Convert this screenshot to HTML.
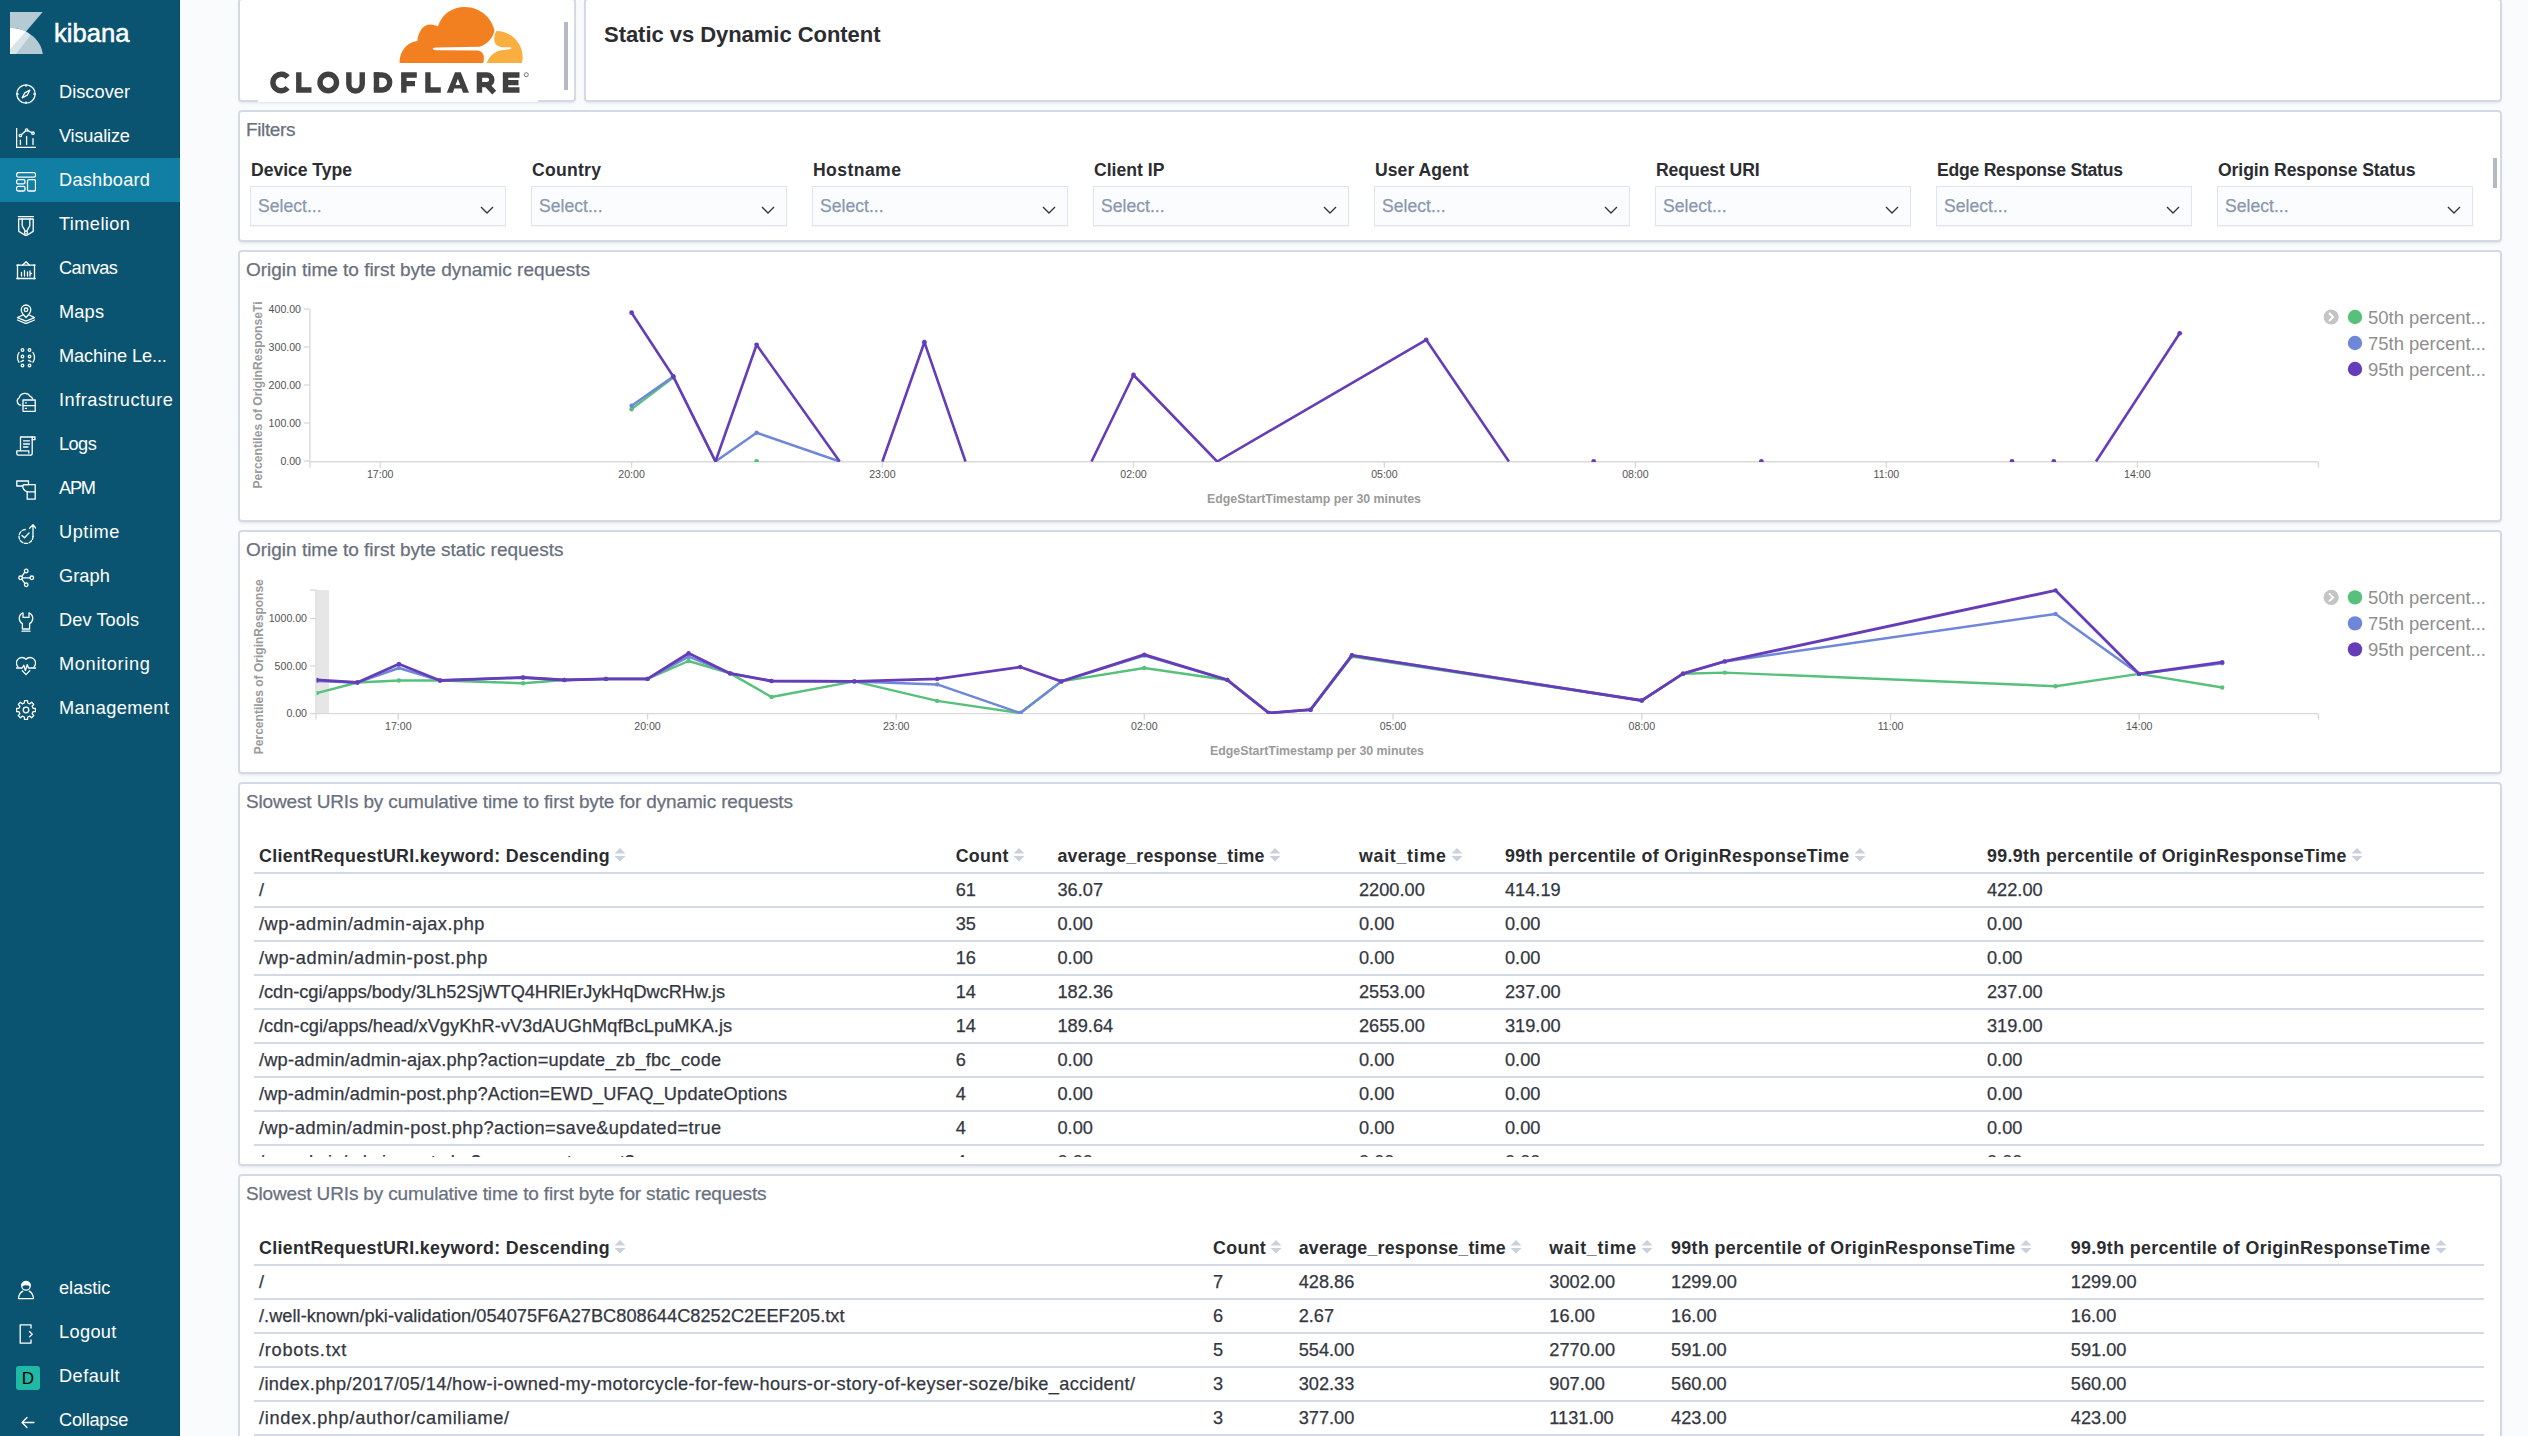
<!DOCTYPE html><html><head><meta charset="utf-8"><title>Static vs Dynamic Content - Kibana</title><style>

*{box-sizing:border-box;margin:0;padding:0}
html,body{width:2528px;height:1436px;overflow:hidden;background:#fafbfd;font-family:"Liberation Sans",sans-serif;}
.abs{position:absolute}
#nav{position:absolute;left:0;top:0;width:180px;height:1436px;background:#0b5471;}
#nav .edge{position:absolute;right:0;top:0;width:1px;height:1436px;background:#084b66}
.ni{position:absolute;left:0;width:180px;height:44px;color:#fff;font-size:18.2px;letter-spacing:0.3px;line-height:44px;white-space:nowrap}
.ni span{position:absolute;left:59px;top:0}
.ni svg{position:absolute;left:16px;top:14px;width:20px;height:20px}
.ni.act{background:#117ea3}
.panel{position:absolute;background:#fff;border:2px solid #d3dae6;border-radius:4px;box-shadow:0 2px 3px -1px rgba(152,162,179,.28)}
.ptitle{position:absolute;left:6px;margin-top:-2px;color:#69707d;-webkit-text-stroke:0.25px #69707d;font-size:19px;white-space:nowrap}
.flab{position:absolute;font-size:17.6px;font-weight:700;color:#2b2d31;white-space:nowrap}
.fsel{position:absolute;width:256px;height:40px;background:#fbfcfd;border:1px solid #dfe5ef;box-shadow:0 1px 1px rgba(0,0,0,.04)}
.fsel span{position:absolute;left:7px;top:9px;font-size:17.6px;color:#8a98ae;-webkit-text-stroke:0.25px #8a98ae}
.fsel svg{position:absolute;left:229px;top:19px}


.tick{font-size:10.6px;fill:#545454;font-family:"Liberation Sans"}
.axt{font-size:12.6px;font-weight:700;fill:#9a9a9a;font-family:"Liberation Sans"}
.leg{font-size:17.6px;fill:#8f8f8f;font-family:"Liberation Sans"}


.tbl{position:absolute;left:0;top:0}
.th{position:absolute;font-size:17.8px;margin-top:-2px;font-weight:700;color:#2a2c30;white-space:nowrap;line-height:20px}
.td{position:absolute;font-size:18.2px;color:#343741;-webkit-text-stroke:0.25px #343741;white-space:nowrap;line-height:20px}
.rl{position:absolute;height:2px;background:#d3dae6}
.sort{display:inline-block;vertical-align:top;margin-left:4px;margin-top:1px}

</style></head><body>
<div id="nav"><div class="edge"></div>
<svg class="abs" style="left:0;top:0" width="180" height="70" viewBox="0 0 180 70">
<path d="M10 12H42.7L26 31.6C21 29 15 28 10 28Z" fill="#b5cad3"/>
<path d="M10 28C24 28 40.5 37 42.8 54H10Z" fill="#b5cad3"/>
<path d="M10 28C16 28 21.5 29.3 26 31.6L10 49.8Z" fill="#fff"/>
<path d="M26 31.6C27.6 32.6 29.2 33.8 30.5 35.2L16 54H10V49.8Z" fill="#d9e4e9"/>
</svg>
<div class="abs" style="left:54px;top:15px;font-size:25.6px;color:#fff;letter-spacing:0px;-webkit-text-stroke:0.5px #fff;line-height:36px">kibana</div>
<div class="ni" style="top:70px"><svg viewBox="0 0 20 20" width="20" height="20"><g fill="none" stroke="#fff" stroke-width="1.3" stroke-linecap="round" stroke-linejoin="round"><circle cx="10" cy="10" r="9.2"/><path d="M13.8 6.2 L11.2 11.2 L6.2 13.8 L8.8 8.8 Z"/><path d="M10 0.8v1.4M10 17.8v1.4M0.8 10h1.4M17.8 10h1.4"/></g></svg><span style="letter-spacing:0.030px">Discover</span></div>
<div class="ni" style="top:114px"><svg viewBox="0 0 20 20" width="20" height="20"><g fill="none" stroke="#fff" stroke-width="1.3" stroke-linecap="round" stroke-linejoin="round"><path d="M0.6 0V19.4H20"/><path d="M4.4 16.6V12.2M10.6 16.6V8.6M17 16.6V10.6"/><path d="M5.5 6.6L9.5 2.9M11.8 2.6L15.9 4.6"/><circle cx="4.4" cy="7.5" r="1.2"/><circle cx="10.6" cy="2" r="1.2"/><circle cx="17" cy="5.2" r="1.2"/></g></svg><span style="letter-spacing:-0.188px">Visualize</span></div>
<div class="ni act" style="top:158px"><svg viewBox="0 0 20 20" width="20" height="20"><g fill="none" stroke="#fff" stroke-width="1.3" stroke-linecap="round" stroke-linejoin="round"><rect x="0.6" y="0.6" width="19" height="4.6" rx="2"/><rect x="0.6" y="7.7" width="8.4" height="4.2" rx="1.6"/><rect x="0.6" y="14.4" width="8.4" height="4.6" rx="1.6"/><rect x="11.5" y="7.7" width="8" height="11.3" rx="1.6"/></g></svg><span style="letter-spacing:0.246px">Dashboard</span></div>
<div class="ni" style="top:202px"><svg viewBox="0 0 20 20" width="20" height="20"><g fill="none" stroke="#fff" stroke-width="1.3" stroke-linecap="round" stroke-linejoin="round"><path d="M2.4 0.6H17.4"/><path d="M2.6 3H17.2V15.4L10 19.8L2.8 15.4Z"/><path d="M6.2 3.2V9.8L9 14.6M13.8 3.2V9.8L11 14.6"/><circle cx="10" cy="16.6" r="1.5"/></g></svg><span style="letter-spacing:0.414px">Timelion</span></div>
<div class="ni" style="top:246px"><svg viewBox="0 0 20 20" width="20" height="20"><g fill="none" stroke="#fff" stroke-width="1.3" stroke-linecap="round" stroke-linejoin="round"><path d="M6.5 5.2L10 1.8L13.5 5.2"/><path d="M1.5 5.2H18.5V18.5H1.5Z"/><path d="M0.8 5.2h1.8M17.4 5.2h1.8M0.8 18.5h1.8M17.4 18.5h1.8"/><path d="M5.5 16V12.5M8.5 16V10.5M11.5 16V12M14 16V11M14 13.5h1.5"/></g></svg><span style="letter-spacing:-0.542px">Canvas</span></div>
<div class="ni" style="top:290px"><svg viewBox="0 0 20 20" width="20" height="20"><g fill="none" stroke="#fff" stroke-width="1.3" stroke-linecap="round" stroke-linejoin="round"><path d="M10 13.5C10 13.5 5.2 8.8 5.2 5.8A4.8 4.8 0 0 1 14.8 5.8C14.8 8.8 10 13.5 10 13.5Z"/><circle cx="10" cy="5.8" r="1.8"/><path d="M6.8 11L1.5 13.6L10 17.2L18.5 13.6L13.2 11"/><path d="M1.5 16L10 19.6L18.5 16"/></g></svg><span style="letter-spacing:0.165px">Maps</span></div>
<div class="ni" style="top:334px"><svg viewBox="0 0 20 20" width="20" height="20"><g fill="none" stroke="#fff" stroke-width="1.3" stroke-linecap="round" stroke-linejoin="round"><circle cx="6.5" cy="2" r="1.3"/><circle cx="13.5" cy="2" r="1.3"/><circle cx="6.5" cy="8.5" r="1.3"/><circle cx="13.5" cy="8.5" r="1.3"/><circle cx="6.5" cy="17.5" r="1.3"/><circle cx="13.5" cy="17.5" r="1.3"/><path d="M3 4.5Q0 9.5 3 14.2M17 4.5Q20 9.5 17 14.2M5 13.6L7.5 12.4M15 13.6L12.5 12.4"/></g></svg><span style="letter-spacing:-0.105px">Machine Le...</span></div>
<div class="ni" style="top:378px"><svg viewBox="0 0 20 20" width="20" height="20"><g fill="none" stroke="#fff" stroke-width="1.3" stroke-linecap="round" stroke-linejoin="round"><path d="M4.8 13.2A4 4 0 0 1 3.2 5.8A6 6 0 0 1 14.2 4.4A4 4 0 0 1 16.6 6.8"/><rect x="7" y="8" width="12.2" height="11.3"/><path d="M7 13.6H19.2M9.4 10.8h1M9.4 16.4h1"/></g></svg><span style="letter-spacing:0.522px">Infrastructure</span></div>
<div class="ni" style="top:422px"><svg viewBox="0 0 20 20" width="20" height="20"><g fill="none" stroke="#fff" stroke-width="1.3" stroke-linecap="round" stroke-linejoin="round"><path d="M4.5 14.8V1H19V3.6H16.2V17.2A2 2 0 0 1 14.2 19.2H2.4A1.8 1.8 0 0 1 0.8 17.4V14.8H12.8V17"/><path d="M16.2 1V3.6"/><path d="M7.5 4.8H13.5M7.5 8H13.5M7.5 11H12"/></g></svg><span style="letter-spacing:-0.555px">Logs</span></div>
<div class="ni" style="top:466px"><svg viewBox="0 0 20 20" width="20" height="20"><g fill="none" stroke="#fff" stroke-width="1.3" stroke-linecap="round" stroke-linejoin="round"><path d="M0.8 1H12.5V4.6H8.2A1.5 1.5 0 0 0 6.8 6H0.8Z"/><path d="M8.2 4.6H19.2V11.8H13.8A6 6 0 0 1 6.8 7.4V6"/><path d="M11.2 11.8V19.2H19.2V11.8"/></g></svg><span style="letter-spacing:-1.220px">APM</span></div>
<div class="ni" style="top:510px"><svg viewBox="0 0 20 20" width="20" height="20"><g fill="none" stroke="#fff" stroke-width="1.3" stroke-linecap="round" stroke-linejoin="round"><path d="M9.2 5.5A7 7 0 1 0 17 12.5" stroke-dasharray="3.2 1.6"/><path d="M17 12.5V1.2M13.6 4.2L17 0.8L20 4.2"/><path d="M6 11.5L8.5 13.8L13 9"/></g></svg><span style="letter-spacing:0.550px">Uptime</span></div>
<div class="ni" style="top:554px"><svg viewBox="0 0 20 20" width="20" height="20"><g fill="none" stroke="#fff" stroke-width="1.3" stroke-linecap="round" stroke-linejoin="round"><circle cx="10.2" cy="3" r="1.8"/><circle cx="15.8" cy="9.8" r="1.8"/><circle cx="10.2" cy="16.8" r="1.8"/><circle cx="4.6" cy="9.8" r="1.8"/><path d="M6.4 9.8H14M5.8 8.4L8.8 4.2M5.8 11.2L8.8 15.4"/></g></svg><span style="letter-spacing:0.079px">Graph</span></div>
<div class="ni" style="top:598px"><svg viewBox="0 0 20 20" width="20" height="20"><g fill="none" stroke="#fff" stroke-width="1.3" stroke-linecap="round" stroke-linejoin="round"><path d="M7 0.8A6 6 0 0 0 6.4 11.6V17H13.6V11.6A6 6 0 0 0 13 0.8V5.4H7Z"/><path d="M6 19.2H14"/></g></svg><span style="letter-spacing:0.077px">Dev Tools</span></div>
<div class="ni" style="top:642px"><svg viewBox="0 0 20 20" width="20" height="20"><g fill="none" stroke="#fff" stroke-width="1.3" stroke-linecap="round" stroke-linejoin="round"><path d="M2 11A5 5 0 0 1 10 3.2A5 5 0 0 1 18 11"/><path d="M0.5 12H6.2L7.8 9.2L9.4 14.5L11.2 8.6L12.6 12H19.5"/><path d="M6.2 14.6L10 18.6L13.8 14.6"/></g></svg><span style="letter-spacing:0.669px">Monitoring</span></div>
<div class="ni" style="top:686px"><svg viewBox="0 0 20 20" width="20" height="20"><g fill="none" stroke="#fff" stroke-width="1.3" stroke-linecap="round" stroke-linejoin="round"><path d="M19.48 8.50 L19.48 11.50 L17.00 11.68 L16.14 13.76 L17.77 15.64 L15.64 17.77 L13.76 16.14 L11.68 17.00 L11.50 19.48 L8.50 19.48 L8.32 17.00 L6.24 16.14 L4.36 17.77 L2.23 15.64 L3.86 13.76 L3.00 11.68 L0.52 11.50 L0.52 8.50 L3.00 8.32 L3.86 6.24 L2.23 4.36 L4.36 2.23 L6.24 3.86 L8.32 3.00 L8.50 0.52 L11.50 0.52 L11.68 3.00 L13.76 3.86 L15.64 2.23 L17.77 4.36 L16.14 6.24 L17.00 8.32Z"/><circle cx="10" cy="10" r="2.8"/></g></svg><span style="letter-spacing:0.419px">Management</span></div>
<div class="ni" style="top:1266px"><svg viewBox="0 0 20 20" width="20" height="20"><g fill="none" stroke="#fff" stroke-width="1.3" stroke-linecap="round" stroke-linejoin="round"><circle cx="10" cy="6" r="4.2"/><path d="M5.8 5.6A4.2 4.2 0 0 1 14.2 5.6Q10 3.6 5.8 5.6Z" fill="#fff"/><path d="M6.8 11.2Q3.5 12.8 2.6 17.4V18.6H17.4V17.4Q16.5 12.8 13.2 11.2"/></g></svg><span style="letter-spacing:-0.015px">elastic</span></div>
<div class="ni" style="top:1310px"><svg viewBox="0 0 20 20" width="20" height="20"><g fill="none" stroke="#fff" stroke-width="1.3" stroke-linecap="round" stroke-linejoin="round"><path d="M15 4V0.8H4.2V19.2H15V16"/><path d="M13.5 7.5L16.2 10.2L13.5 12.9"/></g></svg><span style="letter-spacing:0.347px">Logout</span></div>
<div class="ni" style="top:1354px"><div class="abs" style="left:16px;top:12px;width:24px;height:24px;background:#20b9a5;border-radius:3px;color:#000;font-size:17px;line-height:25px;text-align:center">D</div><span style="letter-spacing:0.489px">Default</span></div>
<div class="ni" style="top:1398px"><svg viewBox="0 0 20 20" width="20" height="20"><g fill="none" stroke="#fff" stroke-width="1.3" stroke-linecap="round" stroke-linejoin="round"><path d="M18 10.5H6M11 5.5L6 10.5L11 15.5"/></g></svg><span style="letter-spacing:-0.217px">Collapse</span></div>
</div>
<div class="panel" style="left:238px;top:-2px;width:338px;height:104px;overflow:hidden">
<svg class="abs" style="left:-2px;top:-2px" width="338" height="104" viewBox="238 -2 338 104">
<path d="M399.5 63C399.5 51 407 42 417.4 41C418 31 424 24.5 430 24.5C433.5 24.5 436 25.5 437.8 26.6C442 14 452 7 465 7C480 7 492 18 494.5 30.5C493 38 487.5 44.5 479.5 46.8L436 47.6C432 47.8 431.5 49.8 436 50.2L477.5 50.4C483.5 51 485 56 483.3 63Z" fill="#f38020"/>
<path d="M486.8 63C489.5 55 496 50.5 504 50L509.5 49.2C512 48.8 512 47.5 509.5 47.3L503 47.2C497 47 494 43.5 494.2 38.5C494.4 35 495.5 32.5 496.5 31C511 31 522.7 43 522.7 57C522.7 59.5 522.3 61.5 521.6 63Z" fill="#faae40"/>
<g fill="none" stroke="#404041" stroke-width="5.4">
<path d="M287.6 77.2A8.3 8.3 0 1 0 287.6 87.8"/>
<path d="M298.8 72.2V90H311.5"/>
<circle cx="328.25" cy="82.45" r="8.25"/>
<path d="M348.85 72.2V84.3A6.7 6.7 0 0 0 362.25 84.3V72.2"/>
<path d="M376.5 72.2V90"/><path d="M373.8 74.95H382.2A7.5 7.5 0 0 1 382.2 89.95H373.8"/>
<path d="M403.85 72.2V92.7M401.1 74.95H416.8M401.1 83.6H415"/>
<path d="M427.95 72.2V90H440.8"/>
<path d="M446.8 92.7L455 72.2H460.8L469 92.7H463L461.5 88.6H454.3L452.8 92.7ZM455.6 85H460.2L457.9 78.8Z" fill="#404041" fill-rule="evenodd" stroke="none"/>
<path d="M479.45 72.2V92.7M476.7 74.95H487A4.8 4.8 0 0 1 487 84.6H479.45M486.5 84.4L494.2 92.7"/>
<path d="M505.55 72.2V92.7M502.8 74.95H519.5M502.8 82.6H518.5M502.8 89.95H519.5"/>
</g>
<circle cx="526.3" cy="74.7" r="2" fill="none" stroke="#404041" stroke-width="0.7"/>
<rect x="564" y="22" width="4" height="68" fill="#b5b9c2"/>

</svg>
</div>
<div class="abs" style="left:258px;top:99.5px;width:280px;height:2.5px;background:#fff"></div>
<div class="panel" style="left:584px;top:-2px;width:1918px;height:104px">
<div class="abs" style="left:18px;top:22px;font-size:22px;font-weight:700;color:#2b2d31;white-space:nowrap;letter-spacing:-0.043px">Static vs Dynamic Content</div>
</div>
<div class="panel" style="left:238px;top:110px;width:2264px;height:132px">
<div class="ptitle" style="top:9px;left:6px;letter-spacing:-0.387px">Filters</div>
<div class="flab" style="left:11px;top:48px;letter-spacing:-0.042px">Device Type</div>
<div class="fsel" style="left:10px;top:74px"><span>Select...</span><svg width="14" height="8" viewBox="0 0 14 8"><path d="M1 1L7 7L13 1" fill="none" stroke="#343741" stroke-width="1.4"/></svg></div>
<div class="flab" style="left:292px;top:48px;letter-spacing:0.256px">Country</div>
<div class="fsel" style="left:291px;top:74px"><span>Select...</span><svg width="14" height="8" viewBox="0 0 14 8"><path d="M1 1L7 7L13 1" fill="none" stroke="#343741" stroke-width="1.4"/></svg></div>
<div class="flab" style="left:573px;top:48px;letter-spacing:0.415px">Hostname</div>
<div class="fsel" style="left:572px;top:74px"><span>Select...</span><svg width="14" height="8" viewBox="0 0 14 8"><path d="M1 1L7 7L13 1" fill="none" stroke="#343741" stroke-width="1.4"/></svg></div>
<div class="flab" style="left:854px;top:48px;letter-spacing:-0.002px">Client IP</div>
<div class="fsel" style="left:853px;top:74px"><span>Select...</span><svg width="14" height="8" viewBox="0 0 14 8"><path d="M1 1L7 7L13 1" fill="none" stroke="#343741" stroke-width="1.4"/></svg></div>
<div class="flab" style="left:1135px;top:48px;letter-spacing:0.040px">User Agent</div>
<div class="fsel" style="left:1134px;top:74px"><span>Select...</span><svg width="14" height="8" viewBox="0 0 14 8"><path d="M1 1L7 7L13 1" fill="none" stroke="#343741" stroke-width="1.4"/></svg></div>
<div class="flab" style="left:1416px;top:48px;letter-spacing:-0.085px">Request URI</div>
<div class="fsel" style="left:1415px;top:74px"><span>Select...</span><svg width="14" height="8" viewBox="0 0 14 8"><path d="M1 1L7 7L13 1" fill="none" stroke="#343741" stroke-width="1.4"/></svg></div>
<div class="flab" style="left:1697px;top:48px;letter-spacing:-0.249px">Edge Response Status</div>
<div class="fsel" style="left:1696px;top:74px"><span>Select...</span><svg width="14" height="8" viewBox="0 0 14 8"><path d="M1 1L7 7L13 1" fill="none" stroke="#343741" stroke-width="1.4"/></svg></div>
<div class="flab" style="left:1978px;top:48px;letter-spacing:-0.096px">Origin Response Status</div>
<div class="fsel" style="left:1977px;top:74px"><span>Select...</span><svg width="14" height="8" viewBox="0 0 14 8"><path d="M1 1L7 7L13 1" fill="none" stroke="#343741" stroke-width="1.4"/></svg></div>
<div class="abs" style="left:2253px;top:46px;width:4px;height:30px;background:#b5b9c2"></div>
</div>
<div class="panel" style="left:238px;top:250px;width:2264px;height:272px"><div class="ptitle" style="top:9px;letter-spacing:-0.008px">Origin time to first byte dynamic requests</div></div>
<svg class="abs" style="left:0;top:0" width="2528" height="1436" viewBox="0 0 2528 1436"><path d="M309.9 309V467.7" stroke="#dadada" stroke-width="1.4"/><path d="M303.9 309H309.9" stroke="#dadada" stroke-width="1.4"/><text class="tick" x="301" y="312.8" text-anchor="end">400.00</text><path d="M303.9 347H309.9" stroke="#dadada" stroke-width="1.4"/><text class="tick" x="301" y="350.8" text-anchor="end">300.00</text><path d="M303.9 385H309.9" stroke="#dadada" stroke-width="1.4"/><text class="tick" x="301" y="388.8" text-anchor="end">200.00</text><path d="M303.9 423H309.9" stroke="#dadada" stroke-width="1.4"/><text class="tick" x="301" y="426.8" text-anchor="end">100.00</text><path d="M303.9 461H309.9" stroke="#dadada" stroke-width="1.4"/><text class="tick" x="301" y="464.8" text-anchor="end">0.00</text><text class="axt" transform="translate(262.2 488.5) rotate(-90)" x="0" y="0" textLength="187" lengthAdjust="spacingAndGlyphs">Percentiles of OriginResponseTi</text><path d="M309.9 461.7H2318.4" stroke="#dadada" stroke-width="1.4"/><path d="M2318.4 461.7V467.7" stroke="#dadada" stroke-width="1.4"/><path d="M380.2 461.7V467.7" stroke="#dadada" stroke-width="1.4"/><text class="tick" x="380.2" y="478" text-anchor="middle">17:00</text><path d="M631.6 461.7V467.7" stroke="#dadada" stroke-width="1.4"/><text class="tick" x="631.6" y="478" text-anchor="middle">20:00</text><path d="M882.4 461.7V467.7" stroke="#dadada" stroke-width="1.4"/><text class="tick" x="882.4" y="478" text-anchor="middle">23:00</text><path d="M1133.5 461.7V467.7" stroke="#dadada" stroke-width="1.4"/><text class="tick" x="1133.5" y="478" text-anchor="middle">02:00</text><path d="M1384.4 461.7V467.7" stroke="#dadada" stroke-width="1.4"/><text class="tick" x="1384.4" y="478" text-anchor="middle">05:00</text><path d="M1635.4 461.7V467.7" stroke="#dadada" stroke-width="1.4"/><text class="tick" x="1635.4" y="478" text-anchor="middle">08:00</text><path d="M1886.4 461.7V467.7" stroke="#dadada" stroke-width="1.4"/><text class="tick" x="1886.4" y="478" text-anchor="middle">11:00</text><path d="M2137.3 461.7V467.7" stroke="#dadada" stroke-width="1.4"/><text class="tick" x="2137.3" y="478" text-anchor="middle">14:00</text><text class="axt" x="1314" y="502.5" text-anchor="middle" textLength="214" lengthAdjust="spacingAndGlyphs">EdgeStartTimestamp per 30 minutes</text><defs><clipPath id="c1"><rect x="310.5" y="280" width="2010" height="182"/></clipPath></defs><g clip-path="url(#c1)"><polyline points="631.6,409.2 673.3,377.5" fill="none" stroke="#57c17b" stroke-width="2.3" stroke-linejoin="round"/><circle cx="631.6" cy="409.2" r="2.2" fill="#57c17b"/><circle cx="673.3" cy="377.5" r="2.2" fill="#57c17b"/><circle cx="756.6" cy="461.5" r="2.4" fill="#57c17b"/><polyline points="631.6,405.8 673.3,376.5 715.5,461.5 756.6,432.7 839.7,461.5" fill="none" stroke="#6f87d8" stroke-width="2.5" stroke-linejoin="round"/><circle cx="631.6" cy="405.8" r="2.2" fill="#6f87d8"/><circle cx="673.3" cy="376.5" r="2.2" fill="#6f87d8"/><circle cx="756.6" cy="432.7" r="2.2" fill="#6f87d8"/><polyline points="631.6,312.7 673.3,376.5 715.5,461.5 756.6,344.8 839.7,461.5" fill="none" stroke="#663db8" stroke-width="2.6" stroke-linejoin="round"/><polyline points="882.4,461.5 924.4,342.2 965.5,461.5" fill="none" stroke="#663db8" stroke-width="2.6" stroke-linejoin="round"/><polyline points="1091.5,461.5 1133.5,375.0 1217.1,461.5 1426.2,339.8 1508.9,461.5" fill="none" stroke="#663db8" stroke-width="2.6" stroke-linejoin="round"/><polyline points="2096.0,461.5 2179.7,333.3" fill="none" stroke="#663db8" stroke-width="2.6" stroke-linejoin="round"/><circle cx="631.6" cy="312.7" r="2.4" fill="#663db8"/><circle cx="673.3" cy="376.5" r="2.4" fill="#663db8"/><circle cx="756.6" cy="344.8" r="2.4" fill="#663db8"/><circle cx="924.4" cy="342.2" r="2.4" fill="#663db8"/><circle cx="1133.5" cy="375.0" r="2.4" fill="#663db8"/><circle cx="1426.2" cy="339.8" r="2.4" fill="#663db8"/><circle cx="2179.7" cy="333.3" r="2.4" fill="#663db8"/><circle cx="1593.7" cy="461.5" r="2.4" fill="#663db8"/><circle cx="1761.4" cy="461.5" r="2.4" fill="#663db8"/><circle cx="2012.0" cy="461.5" r="2.4" fill="#663db8"/><circle cx="2053.8" cy="461.5" r="2.4" fill="#663db8"/></g><circle cx="2331.2" cy="317" r="7.6" fill="#c4c4c4"/><path d="M2329 313L2333 317L2329 321" fill="none" stroke="#fff" stroke-width="2"/><circle cx="2355" cy="317" r="7.2" fill="#57c17b"/><text class="leg" x="2368" y="323.5" textLength="118" lengthAdjust="spacingAndGlyphs">50th percent...</text><circle cx="2355" cy="343" r="7.2" fill="#6f87d8"/><text class="leg" x="2368" y="349.5" textLength="118" lengthAdjust="spacingAndGlyphs">75th percent...</text><circle cx="2355" cy="369" r="7.2" fill="#663db8"/><text class="leg" x="2368" y="375.5" textLength="118" lengthAdjust="spacingAndGlyphs">95th percent...</text></svg>
<div class="panel" style="left:238px;top:530px;width:2264px;height:244px"><div class="ptitle" style="top:9px;letter-spacing:-0.011px">Origin time to first byte static requests</div></div>
<svg class="abs" style="left:0;top:0" width="2528" height="1436" viewBox="0 0 2528 1436"><rect x="316.6" y="590" width="12.4" height="123.60000000000002" fill="#e6e6e6"/><path d="M316 590V719.6" stroke="#dadada" stroke-width="1.4"/><path d="M310 590H316" stroke="#dadada" stroke-width="1.4"/><path d="M310 618.5H316" stroke="#dadada" stroke-width="1.4"/><text class="tick" x="307" y="622.3" text-anchor="end">1000.00</text><path d="M310 666H316" stroke="#dadada" stroke-width="1.4"/><text class="tick" x="307" y="669.8" text-anchor="end">500.00</text><path d="M310 713.6H316" stroke="#dadada" stroke-width="1.4"/><text class="tick" x="307" y="717.4" text-anchor="end">0.00</text><text class="axt" transform="translate(262.6 754.2) rotate(-90)" x="0" y="0" textLength="175" lengthAdjust="spacingAndGlyphs">Percentiles of OriginResponse</text><path d="M316 713.6H2318.4" stroke="#dadada" stroke-width="1.4"/><path d="M2318.4 713.6V719.6" stroke="#dadada" stroke-width="1.4"/><path d="M398.3 713.6V719.6" stroke="#dadada" stroke-width="1.4"/><text class="tick" x="398.3" y="730" text-anchor="middle">17:00</text><path d="M647.5 713.6V719.6" stroke="#dadada" stroke-width="1.4"/><text class="tick" x="647.5" y="730" text-anchor="middle">20:00</text><path d="M896.2 713.6V719.6" stroke="#dadada" stroke-width="1.4"/><text class="tick" x="896.2" y="730" text-anchor="middle">23:00</text><path d="M1144.3 713.6V719.6" stroke="#dadada" stroke-width="1.4"/><text class="tick" x="1144.3" y="730" text-anchor="middle">02:00</text><path d="M1393 713.6V719.6" stroke="#dadada" stroke-width="1.4"/><text class="tick" x="1393" y="730" text-anchor="middle">05:00</text><path d="M1641.8 713.6V719.6" stroke="#dadada" stroke-width="1.4"/><text class="tick" x="1641.8" y="730" text-anchor="middle">08:00</text><path d="M1890.6 713.6V719.6" stroke="#dadada" stroke-width="1.4"/><text class="tick" x="1890.6" y="730" text-anchor="middle">11:00</text><path d="M2139.2 713.6V719.6" stroke="#dadada" stroke-width="1.4"/><text class="tick" x="2139.2" y="730" text-anchor="middle">14:00</text><text class="axt" x="1317" y="754.5" text-anchor="middle" textLength="214" lengthAdjust="spacingAndGlyphs">EdgeStartTimestamp per 30 minutes</text><defs><clipPath id="c2"><rect x="316.6" y="570" width="2010" height="144"/></clipPath></defs><g clip-path="url(#c2)"><polyline points="316.8,693.1 357.4,682.5 398.9,680.5 440.0,680.5 523.1,683.2 564.4,680.0 606.0,679.0 647.5,679.0 688.6,661.0 730.2,673.4 771.5,697.0 854.4,681.4 937.2,700.9 1020.3,713.0 1061.3,681.4 1144.3,668.0 1227.3,680.0 1268.9,713.0 1310.6,709.7 1351.9,656.6 1641.8,700.5 1683.0,673.7 1724.8,672.6 2055.6,686.2 2139.2,673.9 2222.2,687.5" fill="none" stroke="#57c17b" stroke-width="2.4" stroke-linejoin="round"/><circle cx="316.8" cy="693.1" r="2.2" fill="#57c17b"/><circle cx="357.4" cy="682.5" r="2.2" fill="#57c17b"/><circle cx="398.9" cy="680.5" r="2.2" fill="#57c17b"/><circle cx="440.0" cy="680.5" r="2.2" fill="#57c17b"/><circle cx="523.1" cy="683.2" r="2.2" fill="#57c17b"/><circle cx="564.4" cy="680.0" r="2.2" fill="#57c17b"/><circle cx="606.0" cy="679.0" r="2.2" fill="#57c17b"/><circle cx="647.5" cy="679.0" r="2.2" fill="#57c17b"/><circle cx="688.6" cy="661.0" r="2.2" fill="#57c17b"/><circle cx="730.2" cy="673.4" r="2.2" fill="#57c17b"/><circle cx="771.5" cy="697.0" r="2.2" fill="#57c17b"/><circle cx="854.4" cy="681.4" r="2.2" fill="#57c17b"/><circle cx="937.2" cy="700.9" r="2.2" fill="#57c17b"/><circle cx="1020.3" cy="713.0" r="2.2" fill="#57c17b"/><circle cx="1061.3" cy="681.4" r="2.2" fill="#57c17b"/><circle cx="1144.3" cy="668.0" r="2.2" fill="#57c17b"/><circle cx="1227.3" cy="680.0" r="2.2" fill="#57c17b"/><circle cx="1268.9" cy="713.0" r="2.2" fill="#57c17b"/><circle cx="1310.6" cy="709.7" r="2.2" fill="#57c17b"/><circle cx="1351.9" cy="656.6" r="2.2" fill="#57c17b"/><circle cx="1641.8" cy="700.5" r="2.2" fill="#57c17b"/><circle cx="1683.0" cy="673.7" r="2.2" fill="#57c17b"/><circle cx="1724.8" cy="672.6" r="2.2" fill="#57c17b"/><circle cx="2055.6" cy="686.2" r="2.2" fill="#57c17b"/><circle cx="2139.2" cy="673.9" r="2.2" fill="#57c17b"/><circle cx="2222.2" cy="687.5" r="2.2" fill="#57c17b"/><polyline points="316.8,681.0 357.4,682.5 398.9,668.0 440.0,680.5 523.1,677.5 564.4,680.0 606.0,678.9 647.5,678.9 688.6,656.7 730.2,673.4 771.5,681.0 854.4,681.4 937.2,684.4 1020.3,713.0 1061.3,681.4 1144.3,655.5 1227.3,679.9 1268.9,713.0 1310.6,709.7 1351.9,655.3 1641.8,700.5 1683.0,673.7 1724.8,661.4 2055.6,613.9 2139.2,673.9 2222.2,663.2" fill="none" stroke="#6f87d8" stroke-width="2.5" stroke-linejoin="round"/><circle cx="316.8" cy="681.0" r="2.2" fill="#6f87d8"/><circle cx="357.4" cy="682.5" r="2.2" fill="#6f87d8"/><circle cx="398.9" cy="668.0" r="2.2" fill="#6f87d8"/><circle cx="440.0" cy="680.5" r="2.2" fill="#6f87d8"/><circle cx="523.1" cy="677.5" r="2.2" fill="#6f87d8"/><circle cx="564.4" cy="680.0" r="2.2" fill="#6f87d8"/><circle cx="606.0" cy="678.9" r="2.2" fill="#6f87d8"/><circle cx="647.5" cy="678.9" r="2.2" fill="#6f87d8"/><circle cx="688.6" cy="656.7" r="2.2" fill="#6f87d8"/><circle cx="730.2" cy="673.4" r="2.2" fill="#6f87d8"/><circle cx="771.5" cy="681.0" r="2.2" fill="#6f87d8"/><circle cx="854.4" cy="681.4" r="2.2" fill="#6f87d8"/><circle cx="937.2" cy="684.4" r="2.2" fill="#6f87d8"/><circle cx="1020.3" cy="713.0" r="2.2" fill="#6f87d8"/><circle cx="1061.3" cy="681.4" r="2.2" fill="#6f87d8"/><circle cx="1144.3" cy="655.5" r="2.2" fill="#6f87d8"/><circle cx="1227.3" cy="679.9" r="2.2" fill="#6f87d8"/><circle cx="1268.9" cy="713.0" r="2.2" fill="#6f87d8"/><circle cx="1310.6" cy="709.7" r="2.2" fill="#6f87d8"/><circle cx="1351.9" cy="655.3" r="2.2" fill="#6f87d8"/><circle cx="1641.8" cy="700.5" r="2.2" fill="#6f87d8"/><circle cx="1683.0" cy="673.7" r="2.2" fill="#6f87d8"/><circle cx="1724.8" cy="661.4" r="2.2" fill="#6f87d8"/><circle cx="2055.6" cy="613.9" r="2.2" fill="#6f87d8"/><circle cx="2139.2" cy="673.9" r="2.2" fill="#6f87d8"/><circle cx="2222.2" cy="663.2" r="2.2" fill="#6f87d8"/><polyline points="316.8,679.9 357.4,682.5 398.9,664.0 440.0,680.5 523.1,677.5 564.4,680.0 606.0,678.9 647.5,678.9 688.6,653.2 730.2,673.4 771.5,681.0 854.4,681.4 937.2,678.9 1020.3,667.0 1061.3,681.4 1144.3,654.6 1227.3,679.9 1268.9,713.0 1310.6,709.7 1351.9,655.3 1641.8,700.5 1683.0,673.7 1724.8,661.4 2055.6,590.4 2139.2,673.9 2222.2,662.2" fill="none" stroke="#663db8" stroke-width="2.8" stroke-linejoin="round"/><circle cx="316.8" cy="679.9" r="2.2" fill="#663db8"/><circle cx="357.4" cy="682.5" r="2.2" fill="#663db8"/><circle cx="398.9" cy="664.0" r="2.2" fill="#663db8"/><circle cx="440.0" cy="680.5" r="2.2" fill="#663db8"/><circle cx="523.1" cy="677.5" r="2.2" fill="#663db8"/><circle cx="564.4" cy="680.0" r="2.2" fill="#663db8"/><circle cx="606.0" cy="678.9" r="2.2" fill="#663db8"/><circle cx="647.5" cy="678.9" r="2.2" fill="#663db8"/><circle cx="688.6" cy="653.2" r="2.2" fill="#663db8"/><circle cx="730.2" cy="673.4" r="2.2" fill="#663db8"/><circle cx="771.5" cy="681.0" r="2.2" fill="#663db8"/><circle cx="854.4" cy="681.4" r="2.2" fill="#663db8"/><circle cx="937.2" cy="678.9" r="2.2" fill="#663db8"/><circle cx="1020.3" cy="667.0" r="2.2" fill="#663db8"/><circle cx="1061.3" cy="681.4" r="2.2" fill="#663db8"/><circle cx="1144.3" cy="654.6" r="2.2" fill="#663db8"/><circle cx="1227.3" cy="679.9" r="2.2" fill="#663db8"/><circle cx="1268.9" cy="713.0" r="2.2" fill="#663db8"/><circle cx="1310.6" cy="709.7" r="2.2" fill="#663db8"/><circle cx="1351.9" cy="655.3" r="2.2" fill="#663db8"/><circle cx="1641.8" cy="700.5" r="2.2" fill="#663db8"/><circle cx="1683.0" cy="673.7" r="2.2" fill="#663db8"/><circle cx="1724.8" cy="661.4" r="2.2" fill="#663db8"/><circle cx="2055.6" cy="590.4" r="2.2" fill="#663db8"/><circle cx="2139.2" cy="673.9" r="2.2" fill="#663db8"/><circle cx="2222.2" cy="662.2" r="2.2" fill="#663db8"/></g><circle cx="2331.2" cy="597.4" r="7.6" fill="#c4c4c4"/><path d="M2329 593.4L2333 597.4L2329 601.4" fill="none" stroke="#fff" stroke-width="2"/><circle cx="2355" cy="597.4" r="7.2" fill="#57c17b"/><text class="leg" x="2368" y="603.9" textLength="118" lengthAdjust="spacingAndGlyphs">50th percent...</text><circle cx="2355" cy="623.4" r="7.2" fill="#6f87d8"/><text class="leg" x="2368" y="629.9" textLength="118" lengthAdjust="spacingAndGlyphs">75th percent...</text><circle cx="2355" cy="649.4" r="7.2" fill="#663db8"/><text class="leg" x="2368" y="655.9" textLength="118" lengthAdjust="spacingAndGlyphs">95th percent...</text></svg>
<div class="panel" style="left:238px;top:782px;width:2264px;height:384px"><div class="ptitle" style="top:9px;letter-spacing:-0.146px">Slowest URIs by cumulative time to first byte for dynamic requests</div>
<div class="abs" style="left:0;top:0;width:2260px;height:373px;overflow:hidden">
<div class="th" style="left:19.0px;top:64px;letter-spacing:0.335px">ClientRequestURI.keyword: Descending<svg class="sort" width="12" height="16" viewBox="0 0 12 16"><path d="M6 1L11.5 6.5H0.5Z M0.5 9H11.5L6 14.5Z" fill="#c9d1dd"/></svg></div>
<div class="th" style="left:715.7px;top:64px;letter-spacing:0.324px">Count<svg class="sort" width="12" height="16" viewBox="0 0 12 16"><path d="M6 1L11.5 6.5H0.5Z M0.5 9H11.5L6 14.5Z" fill="#c9d1dd"/></svg></div>
<div class="th" style="left:817.5px;top:64px;letter-spacing:0.218px">average_response_time<svg class="sort" width="12" height="16" viewBox="0 0 12 16"><path d="M6 1L11.5 6.5H0.5Z M0.5 9H11.5L6 14.5Z" fill="#c9d1dd"/></svg></div>
<div class="th" style="left:1119.0px;top:64px;letter-spacing:0.723px">wait_time<svg class="sort" width="12" height="16" viewBox="0 0 12 16"><path d="M6 1L11.5 6.5H0.5Z M0.5 9H11.5L6 14.5Z" fill="#c9d1dd"/></svg></div>
<div class="th" style="left:1265.0px;top:64px;letter-spacing:0.374px">99th percentile of OriginResponseTime<svg class="sort" width="12" height="16" viewBox="0 0 12 16"><path d="M6 1L11.5 6.5H0.5Z M0.5 9H11.5L6 14.5Z" fill="#c9d1dd"/></svg></div>
<div class="th" style="left:1747.0px;top:64px;letter-spacing:0.364px">99.9th percentile of OriginResponseTime<svg class="sort" width="12" height="16" viewBox="0 0 12 16"><path d="M6 1L11.5 6.5H0.5Z M0.5 9H11.5L6 14.5Z" fill="#c9d1dd"/></svg></div>
<div class="rl" style="left:14px;top:88px;width:2230px"></div>
<div class="rl" style="left:14px;top:122px;width:2230px"></div>
<div class="rl" style="left:14px;top:156px;width:2230px"></div>
<div class="rl" style="left:14px;top:190px;width:2230px"></div>
<div class="rl" style="left:14px;top:224px;width:2230px"></div>
<div class="rl" style="left:14px;top:258px;width:2230px"></div>
<div class="rl" style="left:14px;top:292px;width:2230px"></div>
<div class="rl" style="left:14px;top:326px;width:2230px"></div>
<div class="rl" style="left:14px;top:360px;width:2230px"></div>
<div class="rl" style="left:14px;top:394px;width:2230px"></div>
<div class="td" style="left:19.0px;top:96px;">/</div>
<div class="td" style="left:715.7px;top:96px;">61</div>
<div class="td" style="left:817.5px;top:96px;">36.07</div>
<div class="td" style="left:1119.0px;top:96px;">2200.00</div>
<div class="td" style="left:1265.0px;top:96px;">414.19</div>
<div class="td" style="left:1747.0px;top:96px;">422.00</div>
<div class="td" style="left:19.0px;top:130px;letter-spacing:0.528px;">/wp-admin/admin-ajax.php</div>
<div class="td" style="left:715.7px;top:130px;">35</div>
<div class="td" style="left:817.5px;top:130px;">0.00</div>
<div class="td" style="left:1119.0px;top:130px;">0.00</div>
<div class="td" style="left:1265.0px;top:130px;">0.00</div>
<div class="td" style="left:1747.0px;top:130px;">0.00</div>
<div class="td" style="left:19.0px;top:164px;letter-spacing:0.606px;">/wp-admin/admin-post.php</div>
<div class="td" style="left:715.7px;top:164px;">16</div>
<div class="td" style="left:817.5px;top:164px;">0.00</div>
<div class="td" style="left:1119.0px;top:164px;">0.00</div>
<div class="td" style="left:1265.0px;top:164px;">0.00</div>
<div class="td" style="left:1747.0px;top:164px;">0.00</div>
<div class="td" style="left:19.0px;top:198px;letter-spacing:-0.038px;">/cdn-cgi/apps/body/3Lh52SjWTQ4HRlErJykHqDwcRHw.js</div>
<div class="td" style="left:715.7px;top:198px;">14</div>
<div class="td" style="left:817.5px;top:198px;">182.36</div>
<div class="td" style="left:1119.0px;top:198px;">2553.00</div>
<div class="td" style="left:1265.0px;top:198px;">237.00</div>
<div class="td" style="left:1747.0px;top:198px;">237.00</div>
<div class="td" style="left:19.0px;top:232px;letter-spacing:0.042px;">/cdn-cgi/apps/head/xVgyKhR-vV3dAUGhMqfBcLpuMKA.js</div>
<div class="td" style="left:715.7px;top:232px;">14</div>
<div class="td" style="left:817.5px;top:232px;">189.64</div>
<div class="td" style="left:1119.0px;top:232px;">2655.00</div>
<div class="td" style="left:1265.0px;top:232px;">319.00</div>
<div class="td" style="left:1747.0px;top:232px;">319.00</div>
<div class="td" style="left:19.0px;top:266px;letter-spacing:0.217px;">/wp-admin/admin-ajax.php?action=update_zb_fbc_code</div>
<div class="td" style="left:715.7px;top:266px;">6</div>
<div class="td" style="left:817.5px;top:266px;">0.00</div>
<div class="td" style="left:1119.0px;top:266px;">0.00</div>
<div class="td" style="left:1265.0px;top:266px;">0.00</div>
<div class="td" style="left:1747.0px;top:266px;">0.00</div>
<div class="td" style="left:19.0px;top:300px;letter-spacing:0.171px;">/wp-admin/admin-post.php?Action=EWD_UFAQ_UpdateOptions</div>
<div class="td" style="left:715.7px;top:300px;">4</div>
<div class="td" style="left:817.5px;top:300px;">0.00</div>
<div class="td" style="left:1119.0px;top:300px;">0.00</div>
<div class="td" style="left:1265.0px;top:300px;">0.00</div>
<div class="td" style="left:1747.0px;top:300px;">0.00</div>
<div class="td" style="left:19.0px;top:334px;letter-spacing:0.422px;">/wp-admin/admin-post.php?action=save&amp;updated=true</div>
<div class="td" style="left:715.7px;top:334px;">4</div>
<div class="td" style="left:817.5px;top:334px;">0.00</div>
<div class="td" style="left:1119.0px;top:334px;">0.00</div>
<div class="td" style="left:1265.0px;top:334px;">0.00</div>
<div class="td" style="left:1747.0px;top:334px;">0.00</div>
<div class="td" style="left:19.0px;top:368px;letter-spacing:-0.109px;">/wp-admin/admin-post.php?ucmanwsot_swart?</div>
<div class="td" style="left:715.7px;top:368px;">4</div>
<div class="td" style="left:817.5px;top:368px;">0.00</div>
<div class="td" style="left:1119.0px;top:368px;">0.00</div>
<div class="td" style="left:1265.0px;top:368px;">0.00</div>
<div class="td" style="left:1747.0px;top:368px;">0.00</div>
</div></div>
<div class="panel" style="left:238px;top:1174px;width:2264px;height:300px"><div class="ptitle" style="top:9px;letter-spacing:-0.149px">Slowest URIs by cumulative time to first byte for static requests</div>
<div class="abs" style="left:0;top:0;width:2260px;height:400px;overflow:hidden">
<div class="th" style="left:19.0px;top:64px;letter-spacing:0.335px">ClientRequestURI.keyword: Descending<svg class="sort" width="12" height="16" viewBox="0 0 12 16"><path d="M6 1L11.5 6.5H0.5Z M0.5 9H11.5L6 14.5Z" fill="#c9d1dd"/></svg></div>
<div class="th" style="left:973.1px;top:64px;letter-spacing:0.324px">Count<svg class="sort" width="12" height="16" viewBox="0 0 12 16"><path d="M6 1L11.5 6.5H0.5Z M0.5 9H11.5L6 14.5Z" fill="#c9d1dd"/></svg></div>
<div class="th" style="left:1058.7px;top:64px;letter-spacing:0.218px">average_response_time<svg class="sort" width="12" height="16" viewBox="0 0 12 16"><path d="M6 1L11.5 6.5H0.5Z M0.5 9H11.5L6 14.5Z" fill="#c9d1dd"/></svg></div>
<div class="th" style="left:1309.3px;top:64px;letter-spacing:0.723px">wait_time<svg class="sort" width="12" height="16" viewBox="0 0 12 16"><path d="M6 1L11.5 6.5H0.5Z M0.5 9H11.5L6 14.5Z" fill="#c9d1dd"/></svg></div>
<div class="th" style="left:1431.1px;top:64px;letter-spacing:0.374px">99th percentile of OriginResponseTime<svg class="sort" width="12" height="16" viewBox="0 0 12 16"><path d="M6 1L11.5 6.5H0.5Z M0.5 9H11.5L6 14.5Z" fill="#c9d1dd"/></svg></div>
<div class="th" style="left:1830.8px;top:64px;letter-spacing:0.364px">99.9th percentile of OriginResponseTime<svg class="sort" width="12" height="16" viewBox="0 0 12 16"><path d="M6 1L11.5 6.5H0.5Z M0.5 9H11.5L6 14.5Z" fill="#c9d1dd"/></svg></div>
<div class="rl" style="left:14px;top:88px;width:2230px"></div>
<div class="rl" style="left:14px;top:122px;width:2230px"></div>
<div class="rl" style="left:14px;top:156px;width:2230px"></div>
<div class="rl" style="left:14px;top:190px;width:2230px"></div>
<div class="rl" style="left:14px;top:224px;width:2230px"></div>
<div class="rl" style="left:14px;top:258px;width:2230px"></div>
<div class="rl" style="left:14px;top:292px;width:2230px"></div>
<div class="td" style="left:19.0px;top:96px;">/</div>
<div class="td" style="left:973.1px;top:96px;">7</div>
<div class="td" style="left:1058.7px;top:96px;">428.86</div>
<div class="td" style="left:1309.3px;top:96px;">3002.00</div>
<div class="td" style="left:1431.1px;top:96px;">1299.00</div>
<div class="td" style="left:1830.8px;top:96px;">1299.00</div>
<div class="td" style="left:19.0px;top:130px;letter-spacing:0.034px;">/.well-known/pki-validation/054075F6A27BC808644C8252C2EEF205.txt</div>
<div class="td" style="left:973.1px;top:130px;">6</div>
<div class="td" style="left:1058.7px;top:130px;">2.67</div>
<div class="td" style="left:1309.3px;top:130px;">16.00</div>
<div class="td" style="left:1431.1px;top:130px;">16.00</div>
<div class="td" style="left:1830.8px;top:130px;">16.00</div>
<div class="td" style="left:19.0px;top:164px;letter-spacing:0.749px;">/robots.txt</div>
<div class="td" style="left:973.1px;top:164px;">5</div>
<div class="td" style="left:1058.7px;top:164px;">554.00</div>
<div class="td" style="left:1309.3px;top:164px;">2770.00</div>
<div class="td" style="left:1431.1px;top:164px;">591.00</div>
<div class="td" style="left:1830.8px;top:164px;">591.00</div>
<div class="td" style="left:19.0px;top:198px;letter-spacing:0.364px;">/index.php/2017/05/14/how-i-owned-my-motorcycle-for-few-hours-or-story-of-keyser-soze/bike_accident/</div>
<div class="td" style="left:973.1px;top:198px;">3</div>
<div class="td" style="left:1058.7px;top:198px;">302.33</div>
<div class="td" style="left:1309.3px;top:198px;">907.00</div>
<div class="td" style="left:1431.1px;top:198px;">560.00</div>
<div class="td" style="left:1830.8px;top:198px;">560.00</div>
<div class="td" style="left:19.0px;top:232px;letter-spacing:0.653px;">/index.php/author/camiliame/</div>
<div class="td" style="left:973.1px;top:232px;">3</div>
<div class="td" style="left:1058.7px;top:232px;">377.00</div>
<div class="td" style="left:1309.3px;top:232px;">1131.00</div>
<div class="td" style="left:1431.1px;top:232px;">423.00</div>
<div class="td" style="left:1830.8px;top:232px;">423.00</div>
<div class="td" style="left:19.0px;top:266px;">/index.php/2017/05/14/</div>
<div class="td" style="left:973.1px;top:266px;">2</div>
<div class="td" style="left:1058.7px;top:266px;">301.50</div>
<div class="td" style="left:1309.3px;top:266px;">603.00</div>
<div class="td" style="left:1431.1px;top:266px;">330.00</div>
<div class="td" style="left:1830.8px;top:266px;">330.00</div>
</div></div>
</body></html>
